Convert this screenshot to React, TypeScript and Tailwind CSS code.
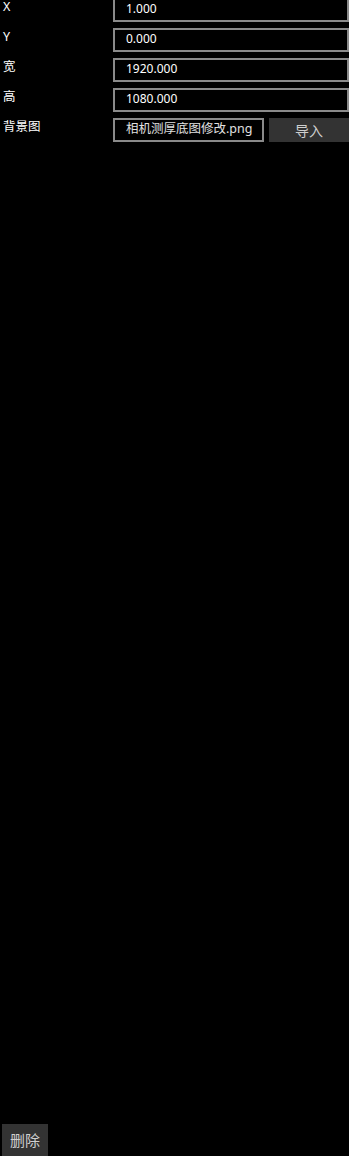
const font = { fontFamily: '"Noto Sans", "Noto Sans CJK SC", sans-serif' }

interface Field {
  label: string
  value: string
}

const fields: Field[] = [
  { label: 'X', value: '1.000' },
  { label: 'Y', value: '0.000' },
  { label: '宽', value: '1920.000' },
  { label: '高', value: '1080.000' },
]

export default function App() {
  return (
    <div className="flex h-[1156px] w-full flex-col overflow-hidden bg-black text-white" style={font}>
      <div className="-mt-[2px] flex flex-col gap-[6px]">
        {fields.map((f) => (
          <div key={f.label} className="flex items-start">
            <div className="w-[113px] pl-[3px] pt-[2px] text-[12.5px] leading-[14px]">{f.label}</div>
            <div className="flex h-[24px] flex-1 items-start border-2 border-[#8a8a8a] pl-[11px] pt-[1px] text-[12px] leading-[16px] text-white">
              {f.value}
            </div>
          </div>
        ))}
        <div className="flex items-start">
          <div className="w-[113px] pl-[3px] pt-[2px] text-[12.5px] leading-[14px]">背景图</div>
          <div className="flex h-[24px] w-[151px] items-start border-2 border-[#8a8a8a] pl-[11px] pt-[1px] text-[12.5px] leading-[16px] text-[#e0e0e0]">
            相机测厚底图修改.png
          </div>
          <button className="ml-[5px] flex h-[24px] flex-1 items-center justify-center bg-[#333333] text-[14px] text-[#cfcfcf]">
            导入
          </button>
        </div>
      </div>
      <div className="flex-1" />
      <div className="pl-[2px]">
        <button className="flex h-[32px] w-[46px] items-center justify-center bg-[#333333] text-[15px] text-[#cfcfcf]">
          删除
        </button>
      </div>
    </div>
  )
}
